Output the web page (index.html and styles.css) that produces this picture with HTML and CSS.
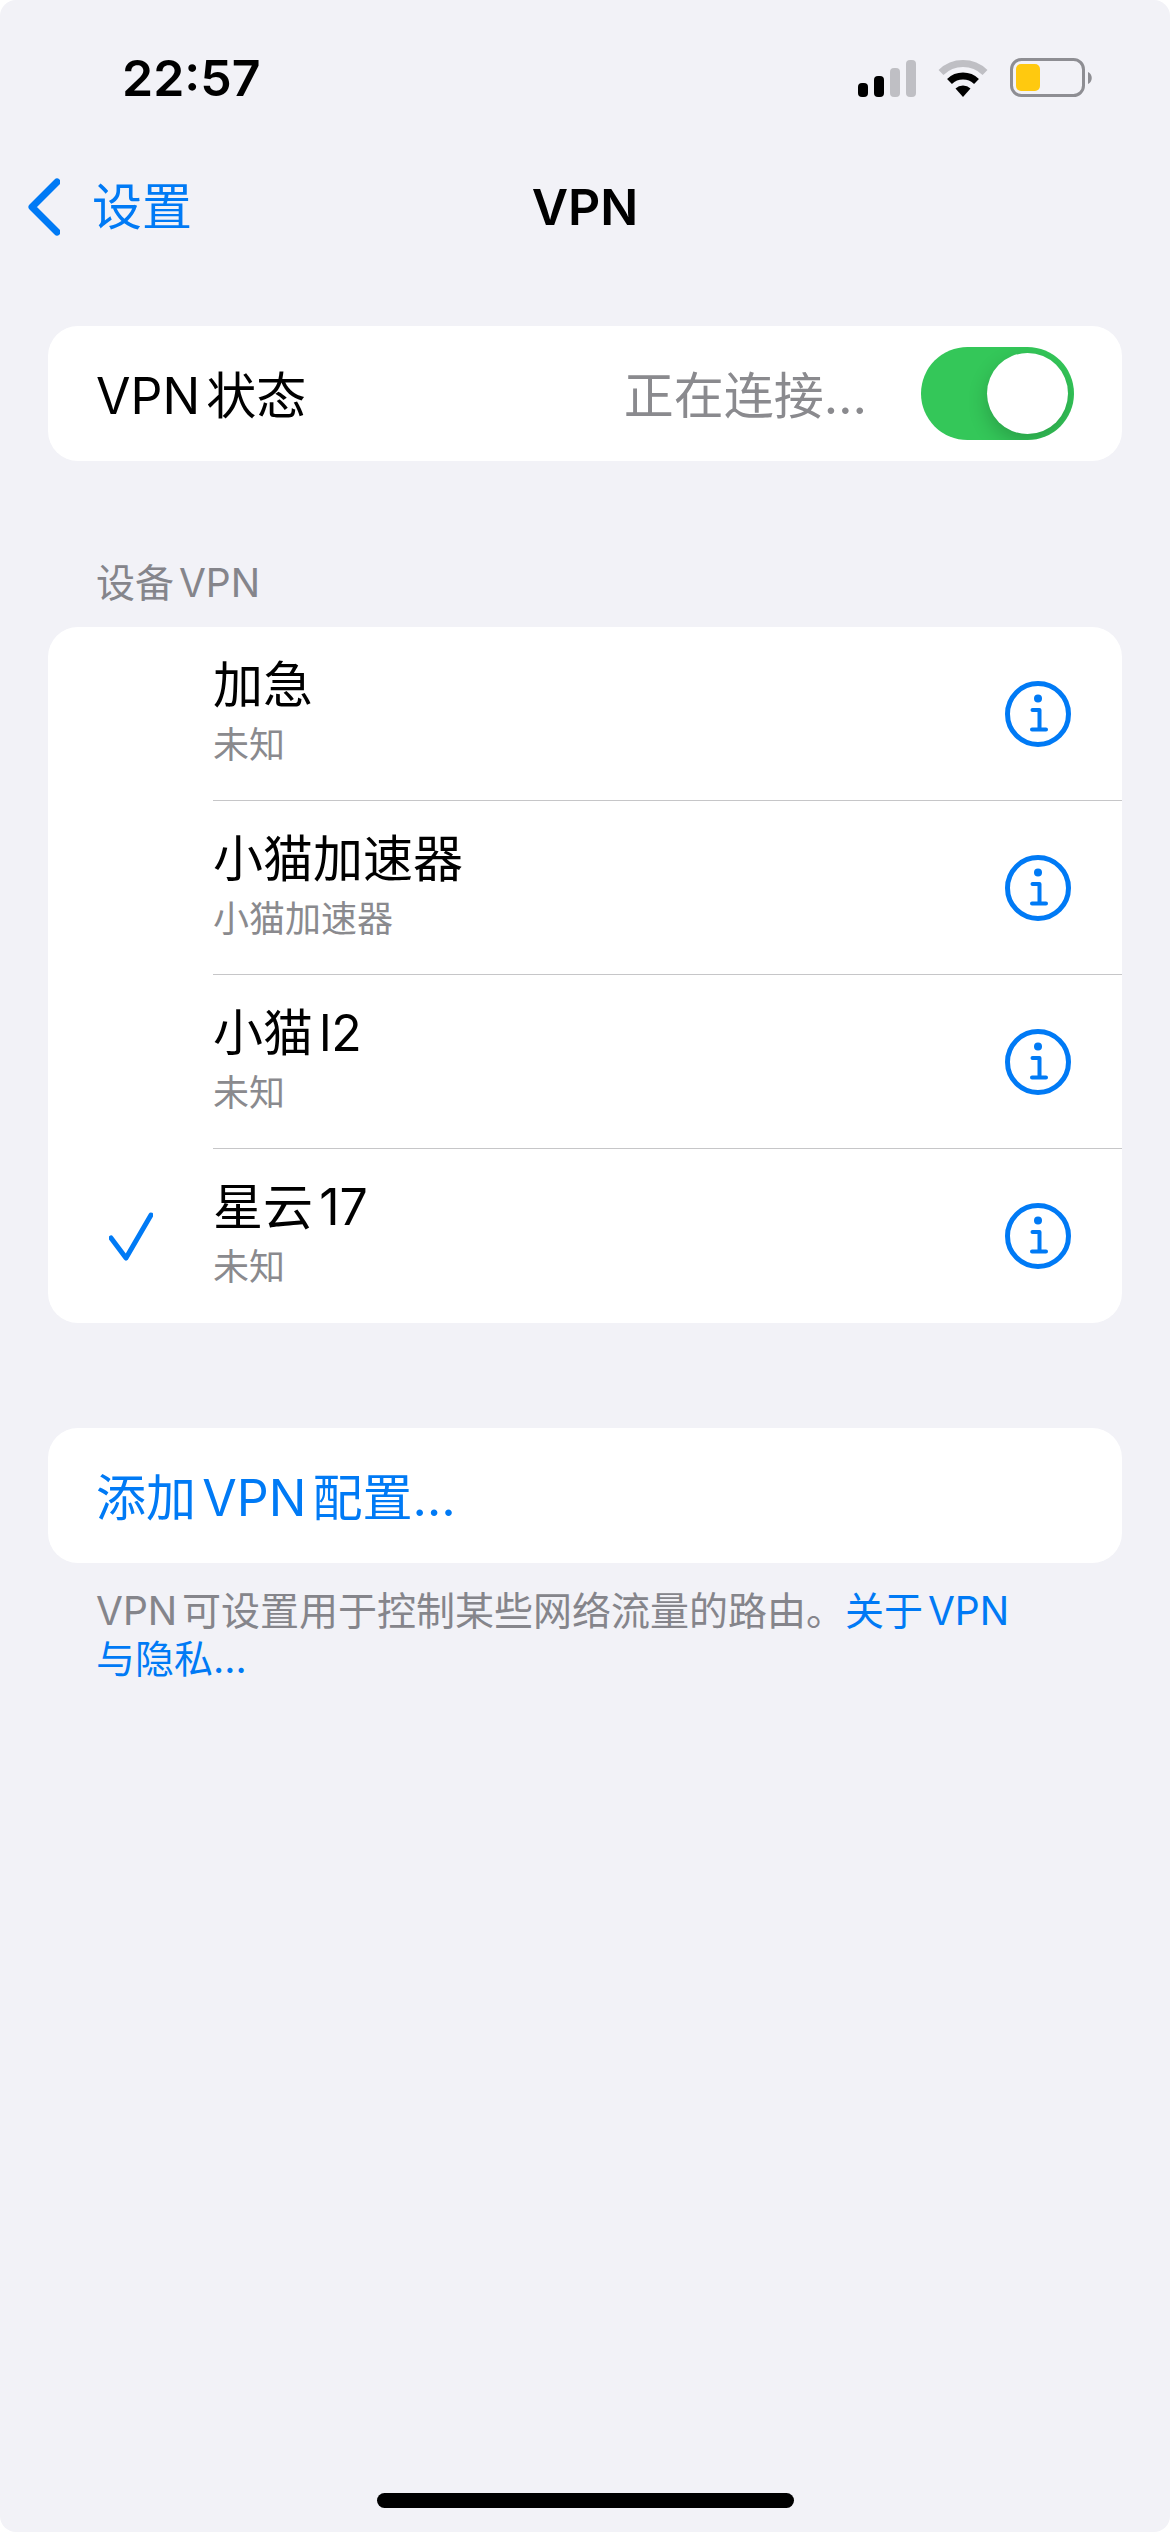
FILE: index.html
```html
<!DOCTYPE html>
<html lang="zh-CN">
<head>
  <title>VPN</title>
  <meta charset="UTF-8">
  <meta name="viewport" content="width=device-width, initial-scale=1.0">
  <link rel="stylesheet" href="styles.css">
</head>
<body>
  <div class="screen">
    <div class="status-bar">
      <span class="time">22:57</span>
      <div class="status-icons">
        <svg class="signal" width="58" height="38" viewBox="0 0 58 38">
          <rect x="0" y="24" width="10" height="14" rx="4" fill="#000"/>
          <rect x="16" y="17" width="10" height="21" rx="4" fill="#000"/>
          <rect x="32" y="9" width="10" height="29" rx="4" fill="#bfbfc4"/>
          <rect x="48" y="1" width="10" height="37" rx="4" fill="#bfbfc4"/>
        </svg>
        <svg class="wifi" width="50" height="38" viewBox="0 0 50 38">
          <path d="M3 13.5A31.5 31.5 0 0 1 47 13.5" fill="none" stroke="#bfbfc4" stroke-width="7"/>
          <path d="M11.500 22.500A19.500 19.500 0 0 1 38.500 22.500" fill="none" stroke="#000" stroke-width="7"/>
          <path d="M25 38L17.500 29.500A11 11 0 0 1 32.500 29.500Z" fill="#000"/>
        </svg>
        <svg class="battery" width="82" height="40" viewBox="0 0 82 40">
          <rect x="1.500" y="1.500" width="72" height="36" rx="10" fill="none" stroke="#8e8e93" stroke-width="3"/>
          <rect x="6" y="6" width="24" height="27" rx="5" fill="#ffc90f"/>
          <path d="M78 14C83 16 83 24 78 26Z" fill="#8e8e93"/>
        </svg>
      </div>
    </div>

    <header class="nav-bar">
      <a class="back" href="#">
        <svg width="36" height="60" viewBox="0 0 36 60">
          <path d="M33 5L8 30L33 55" fill="none" stroke="currentColor" stroke-width="7" stroke-linecap="round" stroke-linejoin="round"/>
        </svg>
        <span>设置</span>
      </a>
      <h1>VPN</h1>
    </header>

    <main>
      <div class="card row">
        <label for="vpnStatus">VPN状态</label>
        <span class="value">正在连接…</span>
        <input class="switch" type="checkbox" id="vpnStatus" checked>
      </div>

      <h2>设备VPN</h2>
      <ul class="card list">
        <li>
          <span class="mark"></span>
          <div class="item">
            <div class="item-text">
              <span class="name">加急</span>
              <span class="sub">未知</span>
            </div>
            <button class="info" aria-label="加急"><svg width="66" height="66" viewBox="0 0 66 66"><use href="#infoIcon"/></svg></button>
          </div>
        </li>
        <li>
          <span class="mark"></span>
          <div class="item">
            <div class="item-text">
              <span class="name">小猫加速器</span>
              <span class="sub">小猫加速器</span>
            </div>
            <button class="info" aria-label="小猫加速器"><svg width="66" height="66" viewBox="0 0 66 66"><use href="#infoIcon"/></svg></button>
          </div>
        </li>
        <li>
          <span class="mark"></span>
          <div class="item">
            <div class="item-text">
              <span class="name">小猫l2</span>
              <span class="sub">未知</span>
            </div>
            <button class="info" aria-label="小猫l2"><svg width="66" height="66" viewBox="0 0 66 66"><use href="#infoIcon"/></svg></button>
          </div>
        </li>
        <li>
          <span class="mark">
            <svg width="44" height="50" viewBox="0 0 44 50">
              <path d="M2 27L17 47L42 4" fill="none" stroke="currentColor" stroke-width="5" stroke-linecap="round" stroke-linejoin="round"/>
            </svg>
          </span>
          <div class="item">
            <div class="item-text">
              <span class="name">星云17</span>
              <span class="sub">未知</span>
            </div>
            <button class="info" aria-label="星云17"><svg width="66" height="66" viewBox="0 0 66 66"><use href="#infoIcon"/></svg></button>
          </div>
        </li>
      </ul>

      <button class="card row add">添加VPN配置…</button>
      <p class="note">VPN可设置用于控制某些网络流量的路由。<a href="#">关于VPN与隐私…</a></p>
    </main>

    <div class="home-bar"></div>
  </div>

  <!-- shared icon for the detail buttons -->
  <svg class="defs" width="0" height="0">
    <symbol id="infoIcon" viewBox="0 0 66 66">
      <circle cx="33" cy="33" r="30.500" fill="none" stroke="currentColor" stroke-width="5"/>
      <circle cx="33" cy="17.500" r="4" fill="currentColor"/>
      <path d="M27.500 29H34.500V48.500M27 48.500H41" fill="none" stroke="currentColor" stroke-width="4" stroke-linecap="round" stroke-linejoin="round"/>
    </symbol>
  </svg>
</body>
</html>
```
FILE: styles.css
```css
* {
  box-sizing: border-box;
}

body {
  margin: 0;
  background-color: #fff;
  font-family: Inter, "Noto Sans CJK SC", sans-serif;
  font-size: 50px;
  line-height: 60px;
  color: #000;
  text-autospace: normal;
}

a {
  color: #007af5;
  text-decoration: none;
}

button {
  font: inherit;
  border: 0;
  padding: 0;
  background: none;
  color: #007af5;
}

svg {
  display: block;
}

.screen {
  display: flex;
  flex-direction: column;
  min-height: 100vh;
  background-color: #f2f2f7;
  border-radius: 16px;
}

.status-bar {
  display: flex;
  justify-content: space-between;
  align-items: center;
  height: 156px;
  padding: 0 78px 0 122px;
}

.time {
  font-weight: 600;
}

.status-icons {
  display: flex;
  align-items: center;
  gap: 22px;
}

.nav-bar {
  display: grid;
  grid-template-columns: 1fr auto 1fr;
  align-items: center;
  height: 102px;
  padding: 0 24px;
}

.back {
  display: flex;
  align-items: center;
  gap: 32px;
}

h1 {
  margin: 0;
  font-size: 50px;
  font-weight: 600;
}

main {
  flex: 1;
  padding: 68px 48px;
}

.card {
  background-color: #fff;
  border-radius: 30px;
}

.row {
  display: flex;
  align-items: center;
  width: 100%;
  min-height: 135px;
  padding: 0 48px;
}

.row label,
.value {
  padding-top: 4px;
}

.value {
  margin-left: auto;
  margin-right: 54px;
  color: #8a8a8e;
}

.switch {
  appearance: none;
  width: 153px;
  height: 93px;
  margin: 0;
  padding: 6px;
  border-radius: 47px;
  background-color: #ccc;
  overflow: hidden;
}

.switch::before {
  content: "";
  display: block;
  width: 81px;
  height: 81px;
  border-radius: 50%;
  background-color: #fff;
  box-shadow: 0 8px 20px rgba(0, 0, 0, 0.2);
}

.switch:checked {
  background-color: #34c759;
}

.switch:checked::before {
  margin-left: auto;
}

h2 {
  margin: 98px 48px 20px;
  font-size: 39px;
  font-weight: 400;
  line-height: 48px;
  color: #85858b;
}

.list {
  list-style: none;
  margin: 0 0 105px;
  padding: 0;
}

.list li {
  display: flex;
}

.mark {
  display: flex;
  align-items: center;
  justify-content: center;
  width: 165px;
  color: #007af5;
}

.item {
  flex: 1;
  display: flex;
  justify-content: space-between;
  align-items: center;
  height: 174px;
  padding-right: 51px;
  border-bottom: 1px solid #c6c6c8;
}

.list li:last-child .item {
  border-bottom: 0;
}

.item-text {
  display: flex;
  flex-direction: column;
  gap: 2px;
}

.sub {
  font-size: 36px;
  line-height: 56px;
  color: #8a8a8e;
}

.add {
  padding-top: 4px;
  text-align: left;
}

.note {
  margin: 24px 96px 0 48px;
  font-size: 39px;
  line-height: 48px;
  color: #85858b;
}

.home-bar {
  align-self: center;
  width: 417px;
  height: 15px;
  margin-bottom: 24px;
  border-radius: 8px;
  background-color: #000;
}

.defs {
  position: absolute;
}
```
